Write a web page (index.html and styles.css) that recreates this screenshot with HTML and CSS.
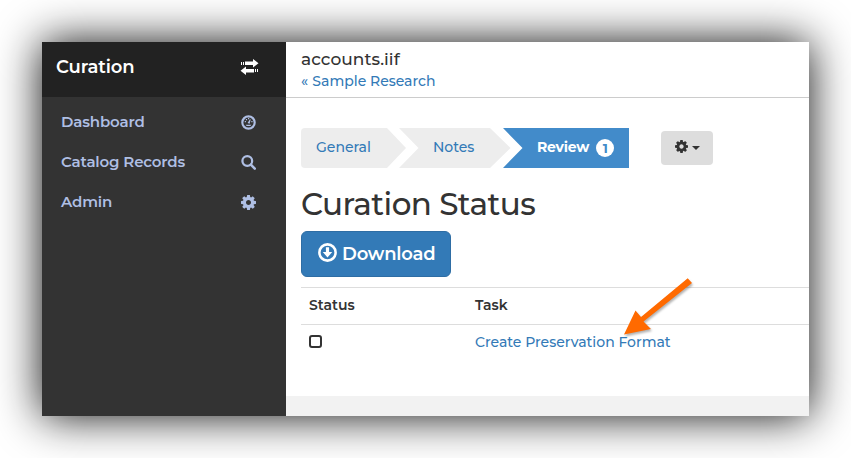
FILE: index.html
```html
<!DOCTYPE html>
<html lang="en">
<head>
<meta charset="utf-8">
<title>Curation</title>
<link rel="stylesheet" href="styles.css">
</head>
<body>
<svg class="defs" width="0" height="0">
  <symbol id="gear" viewBox="0 0 1536 1536">
    <path d="M1024 768q0-106-75-181t-181-75-181 75-75 181 75 181 181 75 181-75 75-181zm512-109v222q0 12-8 23t-20 13l-185 28q-19 54-39 91 35 50 107 138 10 12 10 25t-9 23q-27 37-99 108t-94 71q-12 0-26-9l-138-108q-44 23-91 38-16 136-29 186-7 28-36 28H657q-14 0-24.500-8.500T621 1506l-28-184q-49-16-90-37l-141 107q-10 9-25 9-14 0-25-11-126-114-165-168-7-10-7-23 0-12 8-23 15-21 51-66.500t54-70.500q-27-50-41-99L29 913q-13-2-21-12.500T0 877V655q0-12 8-23t19-13l186-28q14-46 39-92-40-57-107-138-10-12-10-24 0-10 9-23 26-36 98.500-107.500T337 135q13 0 26 10l138 107q44-23 91-38 16-136 29-186 7-28 36-28h222q14 0 24.500 8.500T915 30l28 184q49 16 90 37l142-107q9-9 24-9 13 0 25 10 129 119 165 170 7 8 7 22 0 12-8 23-15 21-51 66.500t-54 70.500q26 50 41 98l183 28q13 2 21 12.500t8 23.500z"/>
  </symbol>
</svg>
<div class="window">
  <aside class="sidebar">
    <div class="brand">
      <span class="brand-name">Curation</span>
      <svg class="swap" viewBox="0 0 19 16"><path d="M5 2.500h8V0l5.500 4.200L13 8.500V6H5zM1 3h1v3H1zM3 3h1v3H3zM14 10H6V7.500L.5 11.700 6 16v-2.500h8zM15 10h1v3h-1zM17 10h1v3h-1z"/></svg>
    </div>
    <nav class="menu">
      <a class="item"><span>Dashboard</span>
        <svg class="icon" viewBox="0 0 16 16"><circle cx="8" cy="8" r="6.600" fill="none" stroke="currentColor" stroke-width="2.300"/><path d="M7 8.500 9.500 4.500l.8.4-1.100 4.400zM4 6.500h1.300v1.300H4zM5.200 4.200h1.300v1.300H5.200zM7.500 3.300h1.200v1.200H7.500zM11 6.500h1.300v1.300H11zM5 10.500h6l-1 1.300H6z"/></svg></a>
      <a class="item"><span>Catalog Records</span>
        <svg class="icon" viewBox="0 0 16 16"><circle cx="6.700" cy="6.500" r="5.200" fill="none" stroke="currentColor" stroke-width="2.400"/><path d="m10.500 10.300 4.200 4.200" stroke="currentColor" stroke-width="2.700" stroke-linecap="round"/></svg></a>
      <a class="item"><span>Admin</span>
        <svg class="icon gear"><use href="#gear"/></svg></a>
    </nav>
  </aside>
  <main class="main">
    <header class="header">
      <div class="file">accounts.iif</div>
      <a class="back"><span class="quote">«</span> <span>Sample Research</span></a>
    </header>
    <section class="content">
      <div class="toolbar">
        <div class="steps">
          <a class="step first">General</a>
          <a class="step second">Notes</a>
          <a class="step active">Review <span class="badge">1</span></a>
        </div>
        <button class="options"><svg class="options-icon"><use href="#gear"/></svg><span class="caret"></span></button>
      </div>
      <h1 class="title">Curation Status</h1>
      <button class="download">
        <svg class="download-icon" viewBox="0 0 18 18"><circle cx="9" cy="9" r="7.700" fill="none" stroke="currentColor" stroke-width="2.400"/><path d="M7.500 4h3v4.500h3L9 13.700 4.500 8.500h3z"/></svg>
        <span>Download</span>
      </button>
      <div class="table">
        <div class="row head"><span>Status</span><span>Task</span></div>
        <div class="row"><span><i class="check"></i></span><a class="link">Create Preservation Format</a></div>
      </div>
    </section>
    <footer class="footer"></footer>
  </main>
  <svg class="arrow" viewBox="0 0 76 66"><path d="M66.700 4.300 71 9 22.500 47.500 30 55 3 60.500 14.500 36.500 20 43z"/></svg>
</div>
</body>
</html>
```
FILE: styles.css
```css
* { box-sizing: border-box; }
body {
  margin: 0;
  padding: 42px;
  height: 458px;
  overflow: hidden;
  background: #fff;
  color: #333;
  font: 500 14px/20px Montserrat, Inter, sans-serif;
}
.defs { position: absolute; }
svg { display: block; fill: currentColor; }
button { border: 0; margin: 0; font: inherit; }
.window {
  position: relative;
  display: flex;
  width: 767px;
  height: 374px;
  background: #fff;
  box-shadow: 0 0 42px rgba(0, 0, 0, .95);
}
.sidebar { width: 244px; background: #333; }
.brand {
  display: flex;
  align-items: center;
  justify-content: space-between;
  height: 55px;
  padding: 0 27px 5px 14px;
  background: #222;
  color: #fff;
  font-size: 18px;
  font-weight: 600;
  letter-spacing: -.1px;
}
.swap { width: 19px; height: 16px; }
.menu {
  padding-top: 5px;
  color: #afbfe4;
  font-size: 15px;
  font-weight: 600;
  letter-spacing: -.15px;
}
.item {
  display: flex;
  align-items: center;
  justify-content: space-between;
  height: 40px;
  padding: 0 30px 0 19px;
}
.icon { width: 15px; height: 15px; margin-top: 1px; }
.main { display: flex; flex-direction: column; width: 523px; }
.header { height: 56px; padding: 6px 15px 0; border-bottom: 1px solid #ccc; }
.file { font-size: 17px; line-height: 22px; letter-spacing: .05px; }
.back { display: block; padding-top: 1px; color: #337ab7; }
.quote { margin-right: .5px; }
.content { flex: 1; padding: 30px 0 0 15px; }
.toolbar { display: flex; align-items: center; gap: 32px; }
.steps { display: flex; color: #337ab7; }
.step {
  height: 40px;
  padding: 9px 0 0 15px;
  background: #ededed;
}
.first {
  width: 105px;
  border-radius: 4px 0 0 4px;
  clip-path: polygon(0 0, 86px 0, 105px 20px, 86px 100%, 0 100%);
}
.second {
  width: 112px;
  margin-left: -7px;
  padding-left: 34px;
  clip-path: polygon(0 0, 91px 0, 111.500px 20px, 91px 100%, 0 100%, 19.500px 20px);
}
.active {
  display: flex;
  gap: 7px;
  width: 126px;
  margin-left: -8px;
  padding-left: 34px;
  background: #428bca;
  color: #fff;
  font-weight: 700;
  letter-spacing: -.2px;
  clip-path: polygon(0 0, 100% 0, 100% 100%, 0 100%, 19.500px 20px);
}
.badge {
  width: 18px;
  height: 18px;
  margin-top: 2px;
  border-radius: 9px;
  background: #fff;
  color: #428bca;
  font-size: 13px;
  line-height: 18px;
  text-align: center;
}
.options {
  display: flex;
  align-items: center;
  gap: 4px;
  width: 52px;
  height: 34px;
  padding: 0 13px 4px 14px;
  border-radius: 4px;
  background: #ddd;
  color: #333;
}
.options-icon { width: 13px; height: 13px; flex: none; }
.caret {
  margin-top: 4px;
  border: 4px solid transparent;
  border-top-color: #333;
  border-bottom: 0;
}
.title {
  margin: 17px 0 8px;
  font-size: 31px;
  font-weight: 500;
  line-height: 38px;
  letter-spacing: -.55px;
}
.download {
  display: flex;
  align-items: center;
  gap: 5px;
  width: 150px;
  height: 46px;
  padding: 0 16px 1px;
  border: 1px solid #2e6da4;
  border-radius: 6px;
  background: #337ab7;
  color: #fff;
  font-size: 18px;
  font-weight: 600;
  letter-spacing: -.2px;
}
.download-icon { width: 19px; height: 19px; margin-top: -3px; flex: none; }
.table { margin-top: 10px; }
.row {
  display: grid;
  grid-template-columns: 166px 1fr;
  height: 37px;
  padding: 7px 8px 0;
  border-top: 1px solid #ddd;
}
.head { font-weight: 600; }
.link { color: #337ab7; }
.check {
  display: block;
  width: 13px;
  height: 13px;
  margin-top: 3px;
  border: 2px solid #333;
  border-radius: 3px;
}
.footer { height: 20px; background: #f2f2f2; }
.arrow {
  position: absolute;
  left: 579px;
  top: 232px;
  width: 76px;
  height: 66px;
  color: #ff6a00;
  filter: drop-shadow(1px 2px 1px rgba(0, 0, 0, .3));
}
```
